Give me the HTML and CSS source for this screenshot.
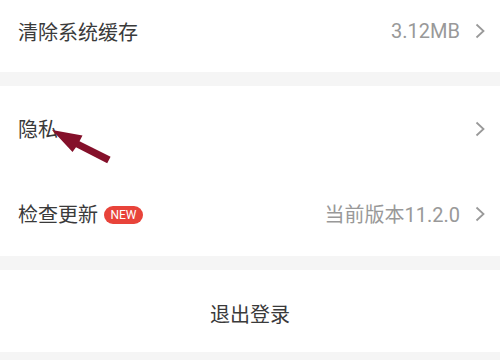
FILE: index.html
```html
<!DOCTYPE html>
<html>
<head>
<meta charset="utf-8">
<link rel="stylesheet" href="styles.css">
</head>
<body>
<div class="page">
  <section class="group first">
    <div class="row">
      <span class="label">清除系统缓存</span>
      <span class="right"><span class="value">3.12MB</span><svg class="chev" viewBox="0 0 10 16"><path d="M1.5 1.5 L8.5 8 L1.5 14.5" /></svg></span>
    </div>
  </section>
  <section class="group">
    <div class="row tall">
      <span class="label">隐私</span>
      <span class="right"><svg class="chev" viewBox="0 0 10 16"><path d="M1.5 1.5 L8.5 8 L1.5 14.5" /></svg></span>
    </div>
    <div class="row tall">
      <span class="label">检查更新<span class="badge">NEW</span></span>
      <span class="right"><span class="value">当前版本11.2.0</span><svg class="chev" viewBox="0 0 10 16"><path d="M1.5 1.5 L8.5 8 L1.5 14.5" /></svg></span>
    </div>
  </section>
  <section class="group logout">
    <div class="logout-text">退出登录</div>
  </section>
  <svg class="arrow" viewBox="0 0 500 360" width="500" height="360">
    <polygon points="52,130 82.5,135.5 79.5,141.2 110.6,156.8 107.2,163.2 76,147.2 72.5,152" />
  </svg>
</div>
</body>
</html>
```
FILE: styles.css
```css
html, body {
  margin: 0;
  padding: 0;
  background: #f5f5f5;
}
.page {
  position: relative;
  width: 500px;
  height: 360px;
  overflow: hidden;
  background: #f5f5f5;
  font-family: "Noto Sans CJK SC", "Noto Sans", sans-serif;
  display: flex;
  flex-direction: column;
  gap: 14px;
}
.group {
  background: #fff;
}
.group.first {
  padding-bottom: 10px;
}
.row {
  height: 62px;
  display: flex;
  align-items: center;
  justify-content: space-between;
  padding: 0 15px 0 18px;
}
.row.tall {
  height: 85px;
}
.label {
  font-size: 20px;
  color: #3a3a3a;
  display: flex;
  align-items: center;
}
.right {
  display: flex;
  align-items: center;
}
.value {
  font-family: Roboto, "Noto Sans CJK SC", sans-serif;
  font-size: 20px;
  color: #999;
  margin-right: 15px;
}
.chev {
  width: 10px;
  height: 16px;
  fill: none;
  stroke: #999;
  stroke-width: 1.8;
}
.badge {
  display: inline-block;
  margin-left: 6px;
  width: 39px;
  height: 18px;
  line-height: 18px;
  border-radius: 9px;
  background: #e8433a;
  color: #fff;
  font-family: Roboto, "Liberation Sans", sans-serif;
  font-size: 12px;
  text-align: center;
  margin-top: 2px;
}
.logout {
  height: 82px;
  display: flex;
  align-items: center;
  justify-content: center;
}
.logout-text {
  font-size: 20px;
  color: #3a3a3a;
  margin-top: 4px;
}
.arrow {
  position: absolute;
  left: 0;
  top: 0;
  pointer-events: none;
}
.arrow polygon {
  fill: #84102a;
}
```
